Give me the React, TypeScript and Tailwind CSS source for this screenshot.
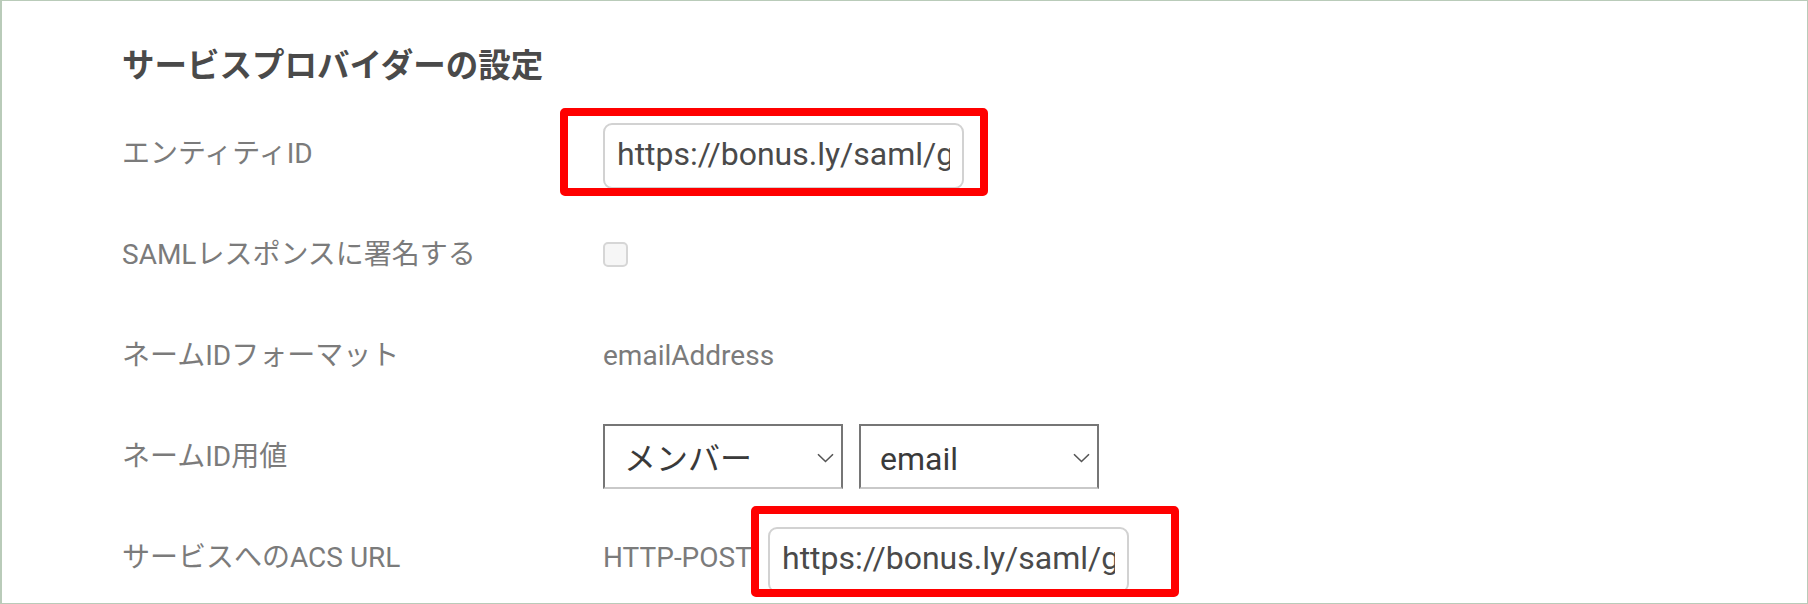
import { ReactNode } from 'react';

const Row = ({ label, children }: { label: string; children: ReactNode }) => (
  <div className="flex h-[101px] items-center">
    <div className="w-[481px] shrink-0 text-[28px] text-[#7b7b7b]">{label}</div>
    {children}
  </div>
);

const UrlInput = () => (
  <input
    readOnly
    value="https://bonus.ly/saml/gZXxy19a8"
    className="mt-[5px] h-[66px] w-[361px] rounded-[9px] border-2 border-[#d2d2d2] bg-white px-[12px] pb-[4px] text-[32px] text-[#4a4a4a] outline-none"
  />
);

const Select = ({ value }: { value: string }) => (
  <div className="relative h-[65px] w-[240px]">
    <select
      value={value}
      onChange={() => {}}
      className="h-full w-full appearance-none rounded-none border-2 border-[#767676] border-b-[#c9c9c9] bg-white pl-[19px] pt-[5px] text-[32px] text-[#3a3a3a] outline-none"
    >
      <option>{value}</option>
    </select>
    <svg
      className="pointer-events-none absolute right-[9px] top-[29px]"
      width="17"
      height="10"
      viewBox="0 0 17 10"
      fill="none"
    >
      <path d="M1 1.2 L8.5 8.5 L16 1.2" stroke="#555" strokeWidth="1.6" />
    </svg>
  </div>
);

export default function App() {
  return (
    <div className="relative h-[604px] w-[1808px] overflow-hidden border border-l-2 border-[#b9cbb9] bg-white font-[Roboto,'Noto_Sans_CJK_JP',sans-serif]">
      <div className="pl-[120px] pt-[45px]">
        <h2 className="h-[40px] text-[32.5px] font-bold leading-[40px] text-[#4a4a4a]">
          サービスプロバイダーの設定
        </h2>
        <div className="mt-[17px]">
          <Row label="エンティティID">
            <UrlInput />
          </Row>
          <Row label="SAMLレスポンスに署名する">
            <div className="h-[25px] w-[25px] rounded-[5px] border-2 border-[#d6d6d6] bg-[#f6f6f6]" />
          </Row>
          <Row label="ネームIDフォーマット">
            <span className="text-[28px] text-[#7b7b7b]">emailAddress</span>
          </Row>
          <Row label="ネームID用値">
            <div className="flex gap-[16px]">
              <Select value="メンバー" />
              <Select value="email" />
            </div>
          </Row>
          <Row label="サービスへのACS URL">
            <span className="w-[165px] shrink-0 text-[28px] text-[#7b7b7b]">HTTP-POST</span>
            <UrlInput />
          </Row>
        </div>
      </div>

      {/* annotation boxes */}
      <div className="absolute left-[558px] top-[107px] h-[88px] w-[428px] rounded-[5px] border-[8px] border-[#ff0000]" />
      <div className="absolute left-[749px] top-[505px] h-[91px] w-[428px] rounded-[5px] border-[8px] border-[#ff0000]" />
    </div>
  );
}
